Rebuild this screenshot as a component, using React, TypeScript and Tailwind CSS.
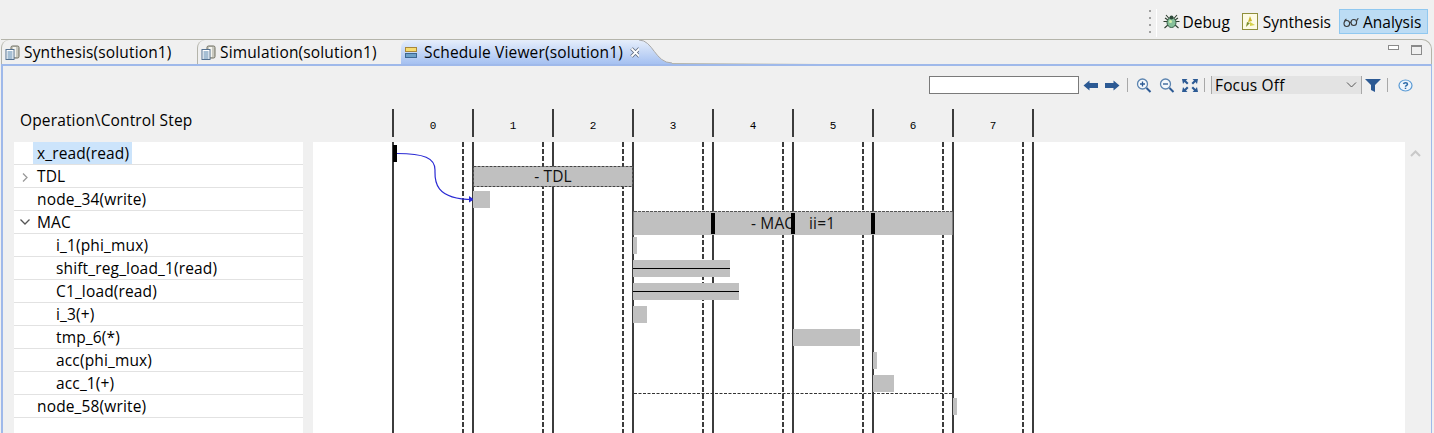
const font = "font-['Open_Sans','Noto_Sans',sans-serif]";

const rows = [
  { label: "x_read(read)", level: 1, selected: true },
  { label: "TDL", level: 1, chevron: "right" },
  { label: "node_34(write)", level: 1 },
  { label: "MAC", level: 1, chevron: "down" },
  { label: "i_1(phi_mux)", level: 2 },
  { label: "shift_reg_load_1(read)", level: 2 },
  { label: "C1_load(read)", level: 2 },
  { label: "i_3(+)", level: 2 },
  { label: "tmp_6(*)", level: 2 },
  { label: "acc(phi_mux)", level: 2 },
  { label: "acc_1(+)", level: 2 },
  { label: "node_58(write)", level: 1 },
];

// [x, y, w, h] in page coordinates, the chart's viewBox uses them as is
const bars = [
  [473, 191, 17, 17],
  [633, 237, 4, 17],
  [633, 260, 97, 17],
  [633, 283, 106, 17],
  [633, 306, 14, 17],
  [793, 329, 67, 17],
  [873, 352, 4, 17],
  [873, 375, 21, 17],
  [953, 398, 4, 17],
];

const steps = [0, 1, 2, 3, 4, 5, 6, 7];

const DocIcon = () => (
  <svg width="15" height="15" viewBox="0 0 15 15" className="shrink-0">
    <rect x="6" y="1" width="8" height="12" rx="1.5" fill="#c9c9c0" stroke="#6f6f60" />
    <rect x="8" y="2" width="3" height="10" fill="#f4f4ee" />
    <rect x="1" y="4.5" width="8" height="10" fill="#fff" stroke="#53708f" />
    <path d="M2.5 7h5M2.5 9h5M2.5 11h5M2.5 13h5" stroke="#4d7ea8" />
  </svg>
);

const ScheduleIcon = () => (
  <svg width="13" height="13" viewBox="0 0 13 13" className="shrink-0">
    <rect x="0.5" y="1.5" width="11" height="4" fill="#f6dc72" stroke="#a8873a" />
    <rect x="0.5" y="7.5" width="11" height="4" fill="#6da0c8" stroke="#3c6690" />
  </svg>
);

const BugIcon = () => (
  <svg width="17" height="17" viewBox="0 0 17 17">
    <path
      d="M3 2l3.5 4M14 2l-3.500 4M0.500 8.500h4M12.500 8.500h4M1.500 15l4-3.500M15.500 15l-4-3.500M2 5l3 2M15 5l-3 2"
      stroke="#2e3d2e"
      strokeWidth="1.100"
    />
    <ellipse cx="8.500" cy="9.500" rx="4.500" ry="5" fill="#86c09a" stroke="#355b45" />
    <circle cx="7.500" cy="8.500" r="1.500" fill="#d2eeac" />
    <circle cx="8.500" cy="4.500" r="2" fill="#2e4a3a" />
  </svg>
);

const SynthesisIcon = () => (
  <svg width="16" height="17" viewBox="0 0 16 17">
    <rect x="0.500" y="0.500" width="15" height="16" fill="#fdfbe4" stroke="#8f8f3c" />
    <path d="M8 3l2 5-4 1z" fill="#c9b52e" />
    <path d="M5 9l3 1-4 4z" fill="#7d8f2a" />
    <path d="M8 9l5 3-5 1z" fill="#d6d24a" />
  </svg>
);

const GlassesIcon = () => (
  <svg width="16" height="12" viewBox="0 0 16 12" fill="none" stroke="#3a3a3a" strokeWidth="1.100">
    <ellipse cx="3.800" cy="7.500" rx="2.800" ry="3" />
    <ellipse cx="10.800" cy="6.500" rx="2.800" ry="3" />
    <path d="M6.500 7c.5-.8 1-.9 1.600-.7M13.500 5.500c.5-2 1-3 2-3M1.500 5.500c.5-1.500 1-2 2-2.500" />
  </svg>
);

const ArrowIcon = ({ flip }: { flip?: boolean }) => (
  <svg width="15" height="11" viewBox="0 0 15 11" className={flip ? "rotate-180" : ""}>
    <path d="M15 3H6.500V0.500L0.500 5.500l6 5V8H15z" fill="#2c5a94" />
  </svg>
);

const ZoomIcon = ({ plus }: { plus?: boolean }) => (
  <svg width="16" height="15" viewBox="0 0 16 15" fill="none">
    <circle cx="6.500" cy="6" r="5" fill="#f4f8fc" stroke="#5c84b0" strokeWidth="1.300" />
    <path d="M10.500 10l4 4" stroke="#2c5a94" strokeWidth="2" />
    <path d={plus ? "M4 6h5M6.500 3.500v5" : "M4 6h5"} stroke="#2c5a94" strokeWidth="1.300" />
  </svg>
);

const FitIcon = () => (
  <svg width="16" height="13" viewBox="0 0 16 13" fill="#2c5a94">
    <path d="M0 0h5.500L4 1.500 6.500 4 5 5.500 2.500 3 1 5z" />
    <path d="M16 0h-5.500L12 1.500 9.500 4 11 5.500 13.500 3 15 5z" />
    <path d="M0 13h5.500L4 11.500 6.500 9 5 7.500 2.500 10 1 8z" />
    <path d="M16 13h-5.500L12 11.500 9.500 9 11 7.500 13.500 10 15 8z" />
  </svg>
);

const FilterIcon = () => (
  <svg width="16" height="13" viewBox="0 0 16 13">
    <path d="M0 0h16L10 6v7L6 11V6z" fill="#2c5a94" />
  </svg>
);

const HelpIcon = () => (
  <svg width="15" height="13" viewBox="0 0 15 13" fill="none">
    <ellipse cx="7.500" cy="6.500" rx="6.500" ry="5.500" fill="#eef5fc" stroke="#5b9bd5" strokeWidth="1.200" />
    <path d="M5.500 5c.3-1.500 4-1.700 4 .2 0 1.200-2 1.200-2 2.500" stroke="#2c6aa8" strokeWidth="1.500" />
    <path d="M7.500 8.700v1.300" stroke="#2c6aa8" strokeWidth="1.500" />
  </svg>
);

const Sep = () => <div className="mx-[6px] h-[14px] w-px bg-[#a8a8a8]" />;

const Tab = ({ label, width }: { label: string; width: string }) => (
  <div className={`flex h-full items-center gap-[4px] rounded-tl-[8px] border-l border-[#b4b4aa] pl-[3px] ${width}`}>
    <DocIcon />
    <span className="pt-[1px]">{label}</span>
  </div>
);

const Chart = () => (
  <svg viewBox="313 142 1092 291" width="1092" height="291" className="block bg-white">
    {steps.map((s) => (
      <line key={s} x1={393 + s * 80} x2={393 + s * 80} y1="142" y2="433" stroke="#3c3c3c" strokeWidth="2" />
    ))}
    <line x1="1033" x2="1033" y1="142" y2="433" stroke="#3c3c3c" strokeWidth="2" />
    {steps.map((s) => (
      <line
        key={s}
        x1={463 + s * 80}
        x2={463 + s * 80}
        y1="142"
        y2="433"
        stroke="#3c3c3c"
        strokeWidth="2"
        strokeDasharray="5 2"
      />
    ))}

    <rect x="393" y="145" width="4" height="17" fill="#000" />
    <path
      d="M397 153.500C424 153.500 435 158 435 170C435 178 432 199.500 473 199.500"
      fill="none"
      stroke="#2a2ad4"
      strokeWidth="1.200"
    />
    <path d="M469 196l5 3.500-5 3z" fill="#2a2ad4" />

    {/* pipeline regions */}
    <rect x="473.500" y="166.500" width="159" height="20" fill="#c0c0c0" stroke="#444" strokeDasharray="3 1" />
    <text x="553" y="182" textAnchor="middle" fontSize="15.500" fill="#111" fontFamily="Open Sans, sans-serif">
      - TDL
    </text>
    <rect x="633.500" y="211.500" width="319" height="23.500" fill="#c0c0c0" />
    <line x1="634" x2="953" y1="211.500" y2="211.500" stroke="#555" strokeDasharray="3 1" />
    <text x="751" y="229" fontSize="15.500" fill="#111" fontFamily="Open Sans, sans-serif">
      - MAC
    </text>
    <text x="809" y="229" fontSize="15.500" fill="#111" fontFamily="Open Sans, sans-serif">
      ii=1
    </text>
    <rect x="711" y="213" width="4" height="21" fill="#000" />
    <rect x="791" y="213" width="4" height="21" fill="#000" />
    <rect x="871" y="213" width="4" height="21" fill="#000" />

    {bars.map(([x, y, w, h]) => (
      <rect key={`${x}-${y}`} x={x} y={y} width={w} height={h} fill="#c0c0c0" />
    ))}
    <rect x="633" y="268" width="97" height="1" fill="#000" />
    <rect x="633" y="291" width="106" height="1" fill="#000" />
    <line x1="634" x2="953" y1="393.500" y2="393.500" stroke="#333" strokeDasharray="3 1.500" />
  </svg>
);

const App = () => {
  return (
    <div className={`flex h-[433px] w-[1434px] flex-col overflow-hidden bg-[#f0f0f0] text-[15.5px] leading-none tracking-[0.15px] text-black ${font}`}>
      {/* perspective bar */}
      <div className="flex h-[39px] shrink-0 items-start justify-end pr-[6px] pt-[9px] tracking-normal">
        <div className="mr-[5px] flex h-[25px] flex-col justify-between py-[1px]">
          <div className="h-[2px] w-[2px] bg-[#a0a0a0]" />
          <div className="h-[2px] w-[2px] bg-[#a0a0a0]" />
          <div className="h-[2px] w-[2px] bg-[#a0a0a0]" />
          <div className="h-[2px] w-[2px] bg-[#a0a0a0]" />
        </div>
        <div className="mr-[6px] h-[28px] w-px bg-white" />
        <div className="flex h-[25px] items-center gap-[2px]">
          <BugIcon />
          <span className="pt-[3px]">Debug</span>
        </div>
        <div className="ml-[12px] flex h-[25px] items-center gap-[5px]">
          <SynthesisIcon />
          <span className="pt-[3px]">Synthesis</span>
        </div>
        <div className="ml-[8px] flex h-[25px] w-[89px] items-center gap-[4px] border border-[#90c8f0] bg-[#bcdcf4] pl-[3px]">
          <GlassesIcon />
          <span className="pt-[3px]">Analysis</span>
        </div>
      </div>

      {/* editor tabs */}
      <div className="ml-[1px] mr-[2px] flex h-[25px] shrink-0 rounded-tr-[10px] border-r border-t border-[#b4b4aa]">
        <Tab label="Synthesis(solution1)" width="w-[196px]" />
        <Tab label="Simulation(solution1)" width="w-[204px]" />
        <div className="flex h-[26px] w-[238px] items-center gap-[6px] rounded-tl-[8px] bg-gradient-to-b from-[#e6eefb] to-[#a0bdf0] pb-[2px] pl-[4px]">
          <ScheduleIcon />
          <span className="whitespace-nowrap pt-[1px]">Schedule Viewer(solution1)</span>
          <svg width="11" height="11" viewBox="0 0 11 11" className="ml-[1px] shrink-0">
            <path d="M1.500 1.500l8 8M9.500 1.500l-8 8" stroke="#5f6a7c" strokeWidth="3.500" />
            <path d="M1.500 1.500l8 8M9.500 1.500l-8 8" stroke="#fff" strokeWidth="1.800" />
          </svg>
        </div>
        <svg width="33" height="26" viewBox="0 0 33 26" className="shrink-0">
          <defs>
            <linearGradient id="tabFill" x1="0" y1="0" x2="0" y2="1">
              <stop offset="0" stopColor="#e6eefb" />
              <stop offset="1" stopColor="#a0bdf0" />
            </linearGradient>
          </defs>
          <path d="M0 0C14 0 16 23 33 23V26H0z" fill="url(#tabFill)" />
          <path d="M0 0C14 0 16 23 33 23" fill="none" stroke="#a8a8a8" />
        </svg>
        <div className="h-full flex-1">
          <div className="mt-[23px] h-px w-[150px] bg-gradient-to-r from-[#b4b4aa] to-transparent" />
        </div>
        <div className="flex items-start pr-[9px] pt-[5px]">
          <div className="mr-[12px] h-[5px] w-[11px] border border-[#8a8a8a] bg-white" />
          <div className="h-[10px] w-[11px] border border-t-2 border-[#8a8a8a]" />
        </div>
      </div>

      {/* schedule viewer panel */}
      <div className="ml-[1px] mr-[2px] flex min-h-0 flex-1 flex-col border-l-2 border-r border-t-2 border-[#9fb9ea]">
        <div className="mt-[10px] flex h-[18px] shrink-0 items-center pl-[926px]">
          <div className="h-full w-[150px] border border-[#7a7a7a] bg-white" />
          <div className="ml-[4px] flex items-center gap-[7px]">
            <ArrowIcon />
            <ArrowIcon flip />
          </div>
          <div className="mx-[7px] h-[14px] w-px bg-[#a8a8a8]" />
          <div className="ml-[1px] flex items-center gap-[7px]">
            <ZoomIcon plus />
            <ZoomIcon />
            <FitIcon />
          </div>
          <Sep />
          <div className="flex h-full w-[151px] items-center justify-between border-x border-[#a8a8a8] bg-[#e3e3e3] pl-[3px] pr-[4px]">
            <span className="pt-[2px]">Focus Off</span>
            <svg width="11" height="6" viewBox="0 0 11 6" fill="none" stroke="#555">
              <path d="M1 0.500l4.500 4.500 4.500-4.500" />
            </svg>
          </div>
          <div className="ml-[3px]">
            <FilterIcon />
          </div>
          <Sep />
          <div className="ml-[4px]">
            <HelpIcon />
          </div>
        </div>

        <div className="mt-[15px] flex h-[28px] shrink-0 items-center pl-[17px]">
          <div className="w-[372px] pb-[5px]">Operation\Control Step</div>
          {steps.map((s) => (
            <div key={s} className="flex h-full w-20 items-center justify-center border-l-2 border-[#3c3c3c] pt-[6px] font-['Liberation_Mono',monospace] text-[11px] tracking-normal">
              {s}
            </div>
          ))}
          <div className="h-full border-l-2 border-[#3c3c3c]" />
        </div>

        <div className="mt-[5px] flex min-h-0 flex-1 pl-[11px]">
          <div className="w-[289px] shrink-0 bg-white">
            {rows.map((r) => (
              <div key={r.label} className="relative flex h-[23px] items-center border-b border-[#e2e2e2]">
                {r.chevron === "right" && (
                  <svg width="6" height="9" viewBox="0 0 6 9" fill="none" stroke="#999" strokeWidth="1.300" className="absolute left-[8px] top-[8px]">
                    <path d="M1 0.500l4 4-4 4" />
                  </svg>
                )}
                {r.chevron === "down" && (
                  <svg width="10" height="6" viewBox="0 0 10 6" fill="none" stroke="#555" strokeWidth="1.300" className="absolute left-[6px] top-[8px]">
                    <path d="M0.500 0.500l4.500 4.500 4.500-4.500" />
                  </svg>
                )}
                <span className={`flex h-[22px] items-center pt-[2px] ${r.level === 2 ? "ml-[42px]" : r.selected ? "ml-[19px] bg-[#cce4fb] pl-[4px] pr-[3px]" : "ml-[23px]"}`}>
                  {r.label}
                </span>
              </div>
            ))}
          </div>
          <div className="ml-[10px] h-[291px] shrink-0">
            <Chart />
          </div>
          <div className="flex w-[26px] shrink-0 justify-center pt-[8px]">
            <svg width="11" height="7" viewBox="0 0 11 7" fill="none" stroke="#c8c8c8" strokeWidth="2" className="-ml-[6px]">
              <path d="M1 6l4.500-4.500 4.500 4.500" />
            </svg>
          </div>
        </div>
      </div>
    </div>
  );
};

export default App;
